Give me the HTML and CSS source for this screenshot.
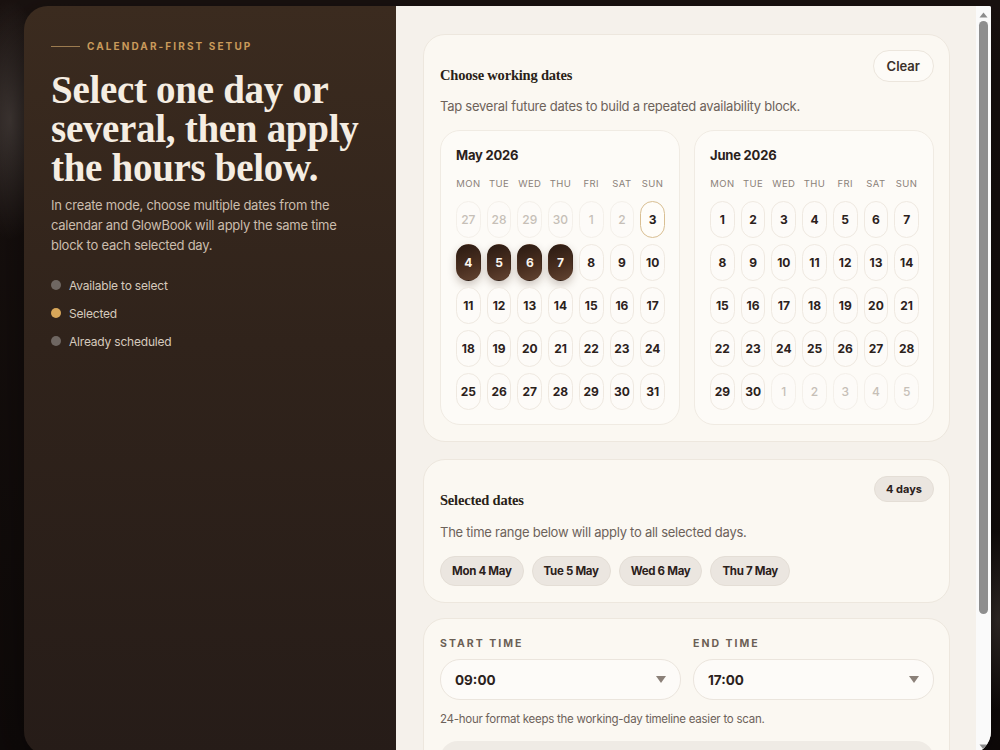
FILE: index.html
```html
<!DOCTYPE html>
<html lang="en">
<head>
    <meta charset="UTF-8">
    <meta name="viewport" content="width=device-width, initial-scale=1.0">
    <title>GlowBook - Working dates</title>
    <link rel="stylesheet" href="styles.css">
</head>
<body>
    <div class="backdrop"></div> <!-- blurred studio photo behind the dialog -->
    <div class="modal">
        <aside class="intro">
            <p class="eyebrow"><span class="eyebrow-line"></span>CALENDAR-FIRST SETUP</p>
            <h1>Select one day or<br>several, then apply<br>the hours below.</h1>
            <p class="intro-text">In create mode, choose multiple dates from the<br>calendar and GlowBook will apply the same time<br>block to each selected day.</p>
            <ul class="legend">
                <li><span class="dot"></span>Available to select</li>
                <li><span class="dot dot-gold"></span>Selected</li>
                <li><span class="dot"></span>Already scheduled</li>
            </ul>
        </aside>

        <section class="planner">
            <div class="planner-scroll">
                <!-- Calendar card -->
                <div class="card dates-card">
                    <div class="card-head">
                        <div>
                            <h2>Choose working dates</h2>
                            <p class="subtext">Tap several future dates to build a repeated availability block.</p>
                        </div>
                        <button class="ghost-btn">Clear</button>
                    </div>
                    <div class="months">
                        <div class="month">
                            <h3>May 2026</h3>
                            <div class="grid" id="may"></div>
                        </div>
                        <div class="month">
                            <h3>June 2026</h3>
                            <div class="grid" id="june"></div>
                        </div>
                    </div>
                </div>

                <!-- Selected days summary -->
                <div class="card selected-card">
                    <div class="card-head">
                        <div>
                            <h2>Selected dates</h2>
                            <p class="subtext">The time range below will apply to all selected days.</p>
                        </div>
                        <span class="count-pill">4 days</span>
                    </div>
                    <div class="chips">
                        <span class="chip">Mon 4 May</span>
                        <span class="chip">Tue 5 May</span>
                        <span class="chip">Wed 6 May</span>
                        <span class="chip">Thu 7 May</span>
                    </div>
                </div>

                <!-- Time range -->
                <div class="card time-card">
                    <div class="time-row">
                        <label class="field">
                            <span class="field-label">START TIME</span>
                            <span class="select-box">09:00
                                <svg width="10" height="7" viewBox="0 0 10 7"><path d="M0 0h10L5 7z" fill="#8b8078"/></svg>
                            </span>
                        </label>
                        <label class="field">
                            <span class="field-label">END TIME</span>
                            <span class="select-box">17:00
                                <svg width="10" height="7" viewBox="0 0 10 7"><path d="M0 0h10L5 7z" fill="#8b8078"/></svg>
                            </span>
                        </label>
                    </div>
                    <p class="hint">24-hour format keeps the working-day timeline easier to scan.</p>
                    <!-- day timeline preview, 09:00 to 17:00 out of 24h -->
                    <div class="timeline">
                        <span class="timeline-fill" style="margin-left: 37.5%; width: 33.3%;"></span>
                    </div>
                </div>
            </div>

            <!-- scroll rail for the planner column -->
            <div class="scroll-rail">
                <svg width="9" height="14" viewBox="0 0 9 14"><path d="M0.5 10.5L4.5 5.5 8.5 10.5z" fill="#8c8c8c"/></svg>
                <span class="scroll-thumb"></span>
                <svg class="rail-end" width="9" height="14" viewBox="0 0 9 14"><path d="M0.5 3.5L4.5 8.5 8.5 3.5z" fill="#8c8c8c"/></svg>
            </div>
        </section>
    </div>

    <script>
        const weekdays = ['MON', 'TUE', 'WED', 'THU', 'FRI', 'SAT', 'SUN'];

        // days: [label, kind] where kind is '', 'faded', 'today' or 'picked'
        function buildMonth(id, days) {
            const grid = document.getElementById(id);
            weekdays.forEach(name => {
                const head = document.createElement('span');
                head.className = 'weekday';
                head.textContent = name;
                grid.appendChild(head);
            });
            days.forEach(([label, kind]) => {
                const cell = document.createElement('span');
                cell.className = 'day' + (kind ? ' ' + kind : '');
                cell.textContent = label;
                grid.appendChild(cell);
            });
        }

        const may = [];
        [27, 28, 29, 30].forEach(d => may.push([d, 'faded']));
        may.push([1, 'faded'], [2, 'faded'], [3, 'today']);
        for (let d = 4; d <= 31; d++) may.push([d, d <= 7 ? 'picked' : '']);

        const june = [];
        for (let d = 1; d <= 30; d++) june.push([d, '']);
        for (let d = 1; d <= 5; d++) june.push([d, 'faded']);

        buildMonth('may', may);
        buildMonth('june', june);
    </script>
</body>
</html>
```

FILE: styles.css
```css
/* General Styles */
* {
    margin: 0;
    padding: 0;
    box-sizing: border-box;
}

body {
    font-family: Inter, "Noto Sans", sans-serif;
    background-color: #130d0b;
    height: 100vh;
    overflow: hidden;
    position: relative;
    color: #2b211b;
}

/* Blurred photo behind the dialog */
.backdrop {
    position: absolute;
    inset: 0;
    background:
        radial-gradient(ellipse 40px 120px at 10px 120px, rgba(120, 110, 105, 0.45), transparent),
        radial-gradient(ellipse 30px 90px at 998px 620px, rgba(90, 80, 75, 0.5), transparent),
        linear-gradient(180deg, #1a1210 0%, #0f0a09 100%);
}

/* Dialog */
.modal {
    position: relative;
    margin: 6px 0 0 24px;
    width: 967px;
    height: 749px;
    display: grid;
    grid-template-columns: 372px 1fr;
    border-radius: 24px 2px 24px 24px;
    overflow: hidden;
    box-shadow: 0 20px 60px rgba(0, 0, 0, 0.5);
}

/* Left intro column */
.intro {
    background: linear-gradient(180deg, #3b2b1f 0%, #30231b 45%, #261c18 100%);
    padding: 33px 27px 0 27px;
    color: #f4ece1;
}

.eyebrow {
    display: flex;
    align-items: center;
    gap: 7px;
    font-size: 10px;
    font-weight: 700;
    letter-spacing: 2.1px;
    line-height: 14px;
    color: #c99a5b;
}

.eyebrow-line {
    width: 29px;
    height: 1px;
    background-color: #9c7b4f;
}

.intro h1 {
    margin-top: 17px;
    font-family: "Liberation Serif", "DejaVu Serif", serif;
    font-size: 39px;
    line-height: 39px;
    font-weight: 700;
    letter-spacing: -0.3px;
    color: #f5ede2;
}

.intro-text {
    margin-top: 8px;
    font-size: 13px;
    line-height: 20px;
    letter-spacing: -0.25px;
    color: #cbbdad;
}

.legend {
    list-style-type: none;
    margin-top: 20px;
}

.legend li {
    display: flex;
    align-items: center;
    gap: 8px;
    height: 20px;
    margin-bottom: 8px;
    font-size: 12px;
    letter-spacing: -0.2px;
    color: #d6cabd;
}

.dot {
    width: 10px;
    height: 10px;
    border-radius: 50%;
    background-color: #6f6762;
}

.dot-gold {
    background-color: #d8a75a;
}

/* Right column: content plus its scroll rail */
.planner {
    background-color: #f5f1eb;
    display: grid;
    grid-template-columns: 1fr 15px;
    min-height: 0;
}

.planner-scroll {
    overflow: hidden;
    padding: 28px 26px 28px 27px;
}

.scroll-rail {
    background-color: #fafafa;
    display: flex;
    flex-direction: column;
    align-items: center;
    padding-top: 1px;
}

.scroll-thumb {
    width: 9px;
    height: 593px;
    border-radius: 5px;
    background-color: #8e8e8e;
}

.rail-end {
    margin-top: auto;
}

.card {
    background-color: #fbf8f2;
    border: 1px solid #ede7de;
    border-radius: 22px;
    padding: 15px 15px 16px 16px;
}

.card + .card {
    margin-top: 17px;
}

.card-head {
    display: flex;
    justify-content: space-between;
    align-items: flex-start;
}

.card h2 {
    margin-top: 15px;
    font-family: "Liberation Serif", "DejaVu Serif", serif;
    font-size: 14.5px;
    line-height: 20px;
    font-weight: 700;
    letter-spacing: -0.2px;
    color: #2a1f18;
}

.subtext {
    margin-top: 11px;
    font-size: 13px;
    line-height: 20px;
    letter-spacing: -0.25px;
    color: #6d625a;
}

.ghost-btn {
    height: 32px;
    padding: 0 13px;
    border: 1px solid #ece6dd;
    border-radius: 16px;
    background-color: #fdfbf7;
    font-family: inherit;
    font-size: 13px;
    font-weight: 600;
    color: #3b3029;
    cursor: pointer;
}

/* Month calendars */
.months {
    display: grid;
    grid-template-columns: 1fr 1fr;
    gap: 14px;
    margin-top: 14px;
}

.month {
    background-color: #fdfbf7;
    border: 1px solid #f0ebe3;
    border-radius: 20px;
    padding: 14px 14px 14px 15px;
}

.month h3 {
    font-size: 13px;
    line-height: 20px;
    font-weight: 700;
    letter-spacing: -0.2px;
    color: #2a211b;
}

.grid {
    display: grid;
    grid-template-columns: repeat(7, 1fr);
    column-gap: 6px;
    row-gap: 6px;
    margin-top: 12px;
}

.weekday {
    text-align: center;
    font-size: 9.5px;
    line-height: 14px;
    letter-spacing: 0.4px;
    color: #8b8179;
    margin-bottom: 4px;
}

.day {
    height: 37px;
    display: flex;
    align-items: center;
    justify-content: center;
    border: 1px solid #efe9e1;
    border-radius: 13px;
    background-color: #fdfbf8;
    font-size: 12px;
    font-weight: 700;
    color: #2b211b;
}

.day.faded {
    border-color: #f4f0ea;
    font-weight: 500;
    color: #c6bfb7;
}

.day.today {
    border-color: #d9bf93;
    background-color: #fffdf9;
}

.day.picked {
    border-color: transparent;
    background: linear-gradient(160deg, #2a1a12 0%, #4a2f20 60%, #624331 100%);
    color: #fbf5ee;
    box-shadow: 0 4px 8px rgba(60, 35, 20, 0.25);
}

/* Selected dates */
.count-pill {
    margin-top: 1px;
    height: 26px;
    line-height: 24px;
    padding: 0 11px;
    border-radius: 13px;
    background-color: #ebe6e0;
    border: 1px solid #e4ded6;
    font-size: 11px;
    font-weight: 700;
    color: #2b211b;
}

.selected-card h2 {
    margin-top: 15px;
}

.selected-card .subtext {
    margin-top: 12px;
}

.chips {
    display: flex;
    gap: 8px;
    margin-top: 14px;
}

.chip {
    height: 30px;
    line-height: 28px;
    padding: 0 11px;
    border-radius: 15px;
    background-color: #ebe6e0;
    border: 1px solid #e4ded6;
    font-size: 11.5px;
    font-weight: 700;
    letter-spacing: -0.3px;
    color: #2b211b;
}

/* Time range */
.card.time-card {
    margin-top: 15px;
    padding-top: 18px;
}

.time-row {
    display: grid;
    grid-template-columns: 1fr 1fr;
    gap: 12px;
}

.field {
    display: flex;
    flex-direction: column;
    gap: 8px;
}

.field-label {
    font-size: 10.5px;
    line-height: 14px;
    font-weight: 700;
    letter-spacing: 2px;
    color: #6b5f55;
}

.select-box {
    height: 41px;
    display: flex;
    align-items: center;
    justify-content: space-between;
    padding: 0 14px 0 14px;
    border: 1px solid #ebe5dd;
    border-radius: 20px;
    background-color: #fdfbf8;
    font-size: 13.5px;
    font-weight: 700;
    color: #2b211b;
}

.hint {
    margin-top: 11px;
    font-size: 11.5px;
    line-height: 16px;
    letter-spacing: -0.25px;
    color: #6d625a;
}

.timeline {
    margin-top: 14px;
    height: 64px;
    padding: 26px 16px;
    border-radius: 18px;
    background-color: #efebe5;
    display: flex;
}

.timeline-fill {
    height: 12px;
    border-radius: 6px;
    background-color: #d8a75a;
}
```
